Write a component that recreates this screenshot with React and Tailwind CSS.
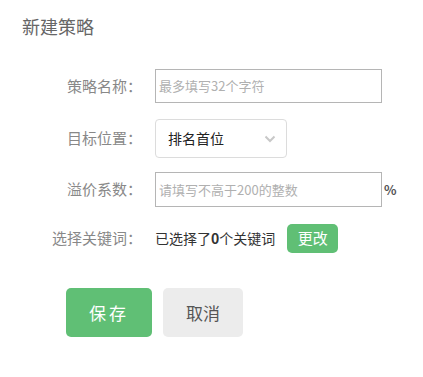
export default function App() {
  const font = { fontFamily: '"Noto Sans CJK SC", "Noto Sans", sans-serif' };
  return (
    <div className="w-[423px] h-[377px] bg-white" style={font}>
      <div className="pt-[15px] pl-[22px] text-[18px] leading-[22px] text-[#666]">新建策略</div>

      <div className="mt-[32px] flex items-center h-[34px]">
        <div className="w-[142px] text-right text-[15px] text-[#888]">策略名称：</div>
        <div className="ml-[13px] w-[227px] h-[34px] border border-[#b5b5b5] flex items-center pl-[3px] text-[13px] text-[#b0b0b0]">
          最多填写32个字符
        </div>
      </div>

      <div className="mt-[16px] flex items-center h-[39px]">
        <div className="w-[142px] text-right text-[15px] text-[#888]">目标位置：</div>
        <div className="ml-[13px] w-[132px] h-[39px] border border-[#dcdcdc] rounded-[4px] flex items-center justify-between pl-[12px] pr-[10px]">
          <span className="text-[14px] text-[#222]">排名首位</span>
          <svg width="12" height="8" viewBox="0 0 12 8">
            <path d="M1.5 1.5 L6 6 L10.5 1.5" fill="none" stroke="#c8c8c8" strokeWidth="2" />
          </svg>
        </div>
      </div>

      <div className="mt-[14px] flex items-center h-[35px]">
        <div className="w-[142px] text-right text-[15px] text-[#888]">溢价系数：</div>
        <div className="ml-[13px] w-[227px] h-[35px] border border-[#b5b5b5] flex items-center pl-[3px] text-[13px] text-[#b0b0b0]">
          请填写不高于200的整数
        </div>
        <span className="ml-[2px] text-[13px] font-bold text-[#555]">%</span>
      </div>

      <div className="mt-[17px] flex items-center h-[29px]">
        <div className="w-[142px] text-right text-[15px] text-[#888]">选择关键词：</div>
        <div className="ml-[13px] text-[14px] text-[#333]">
          已选择了<span className="font-bold">0</span>个关键词
        </div>
        <div className="ml-[12px] w-[51px] h-[29px] rounded-[5px] bg-[#60bf75] text-white text-[15px] flex items-center justify-center">
          更改
        </div>
      </div>

      <div className="mt-[35px] flex items-center pl-[66px] gap-[11px]">
        <div className="w-[86px] h-[49px] rounded-[5px] bg-[#60bf75] text-white text-[17px] tracking-[3px] flex items-center justify-center">
          保存
        </div>
        <div className="w-[80px] h-[49px] rounded-[5px] bg-[#ececec] text-[#555] text-[17px] flex items-center justify-center">
          取消
        </div>
      </div>
    </div>
  );
}
